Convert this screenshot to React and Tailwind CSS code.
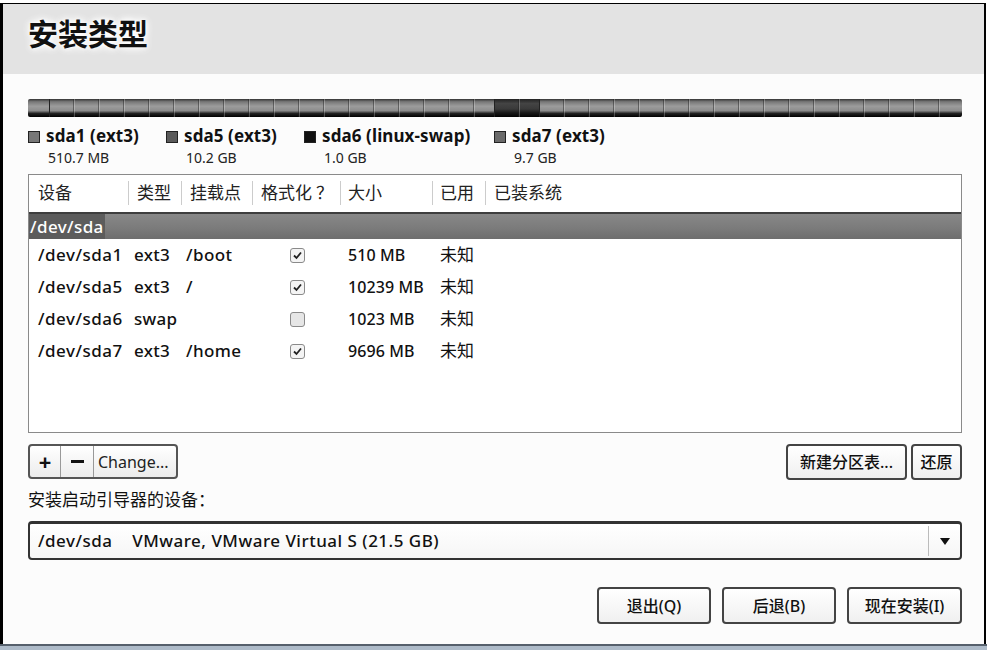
import React from "react";

const segs = [
  { w: 22, dark: false },
  { w: 445, dark: false },
  { w: 45, dark: true },
  { w: 422, dark: false },
];

const legend = [
  { name: "sda1 (ext3)", size: "510.7 MB", sw: "bg-[#777]", w: "w-[138px]" },
  { name: "sda5 (ext3)", size: "10.2 GB", sw: "bg-[#5a5a5a]", w: "w-[138px]" },
  { name: "sda6 (linux-swap)", size: "1.0 GB", sw: "bg-[#111]", w: "w-[190px]" },
  { name: "sda7 (ext3)", size: "9.7 GB", sw: "bg-[#6a6a6a]", w: "w-[138px]" },
];

const rows = [
  { dev: "/dev/sda1", type: "ext3", mount: "/boot", fmt: true, size: "510 MB" },
  { dev: "/dev/sda5", type: "ext3", mount: "/", fmt: true, size: "10239 MB" },
  { dev: "/dev/sda6", type: "swap", mount: "", fmt: false, size: "1023 MB" },
  { dev: "/dev/sda7", type: "ext3", mount: "/home", fmt: true, size: "9696 MB" },
];

function Check({ on }) {
  return (
    <div className={"w-[15px] h-[15px] rounded-[3px] border border-[#8a8a8a] flex items-center justify-center " + (on ? "bg-[#f4f4f4]" : "bg-[#e6e6e6]")}>
      {on && (
        <svg width="11" height="11" viewBox="0 0 11 11">
          <path d="M2 5.5 L4.5 8 L9 2.5" fill="none" stroke="#222" strokeWidth="1.8" />
        </svg>
      )}
    </div>
  );
}

function Btn({ children, className }) {
  return (
    <div className={"flex items-center justify-center rounded-[4px] border-2 border-[#444] bg-[linear-gradient(#ffffff,#f0f0f0)] text-[16px] font-medium text-[#111] " + className}>
      {children}
    </div>
  );
}

export default function App() {
  return (
    <div className="w-[987px] h-[650px] bg-white flex flex-col font-['Noto_Sans','Noto_Sans_CJK_SC',sans-serif] text-[#111] overflow-hidden">
      <div className="h-[3px] shrink-0" />
      <div className="flex-1 w-[986px] border-t border-black border-l-[3px] border-r-2 bg-[#fcfcfc] flex flex-col">
        <div className="h-[70px] bg-[#e3e3e3] pl-[25px] pt-[9px]">
          <div className="text-[30px] font-semibold leading-[42px] text-[#111] [text-shadow:0_0_4px_#fff,0_0_8px_#fff,0_0_10px_#fff]">安装类型</div>
        </div>
        <div className="pl-[25px] pr-[22px] pt-[25px] flex flex-col">
          {/* partition bar */}
          <div className="flex h-[18px] rounded-[2px] overflow-hidden">
            {segs.map((s, i) => (
              <div
                key={i}
                style={{ width: s.w }}
                className={
                  "h-full border-r border-[#222] last:border-r-0 " +
                  (s.dark
                    ? "bg-[linear-gradient(#222_0,#444_25%,#3a3a3a_55%,#1a1a1a_75%,#000_100%)]"
                    : "bg-[linear-gradient(#333_0,#777_15%,#9c9c9c_40%,#8c8c8c_65%,#222_80%,#000_100%)]")
                }
              >
                <div className="h-full bg-[repeating-linear-gradient(90deg,transparent_0,transparent_23px,rgba(30,30,30,0.45)_23px,rgba(30,30,30,0.45)_24px,rgba(255,255,255,0.25)_24px,rgba(255,255,255,0.25)_25px)]" />
              </div>
            ))}
          </div>
          {/* legend */}
          <div className="flex mt-[7px] h-[50px]">
            {legend.map((l, i) => (
              <div key={i} className={"flex " + l.w}>
                <div className={"w-[12px] h-[12px] mt-[7px] border border-[#222] " + l.sw} />
                <div className="ml-[6px] flex flex-col">
                  <div className="text-[17px] font-bold leading-[24px] tracking-[0.1px]">{l.name}</div>
                  <div className="text-[14px] leading-[19px] ml-[2px] text-[#222]">{l.size}</div>
                </div>
              </div>
            ))}
          </div>
          {/* table */}
          <div className="h-[259px] border border-[#8a8a8a] bg-white flex flex-col">
            <div className="h-[35px] flex items-center text-[17px] text-[#222]">
              <div className="w-[99px] pl-[9px]">设备</div>
              <div className="w-[53px] pl-[8px] border-l border-[#ccc] leading-[24px]">类型</div>
              <div className="w-[71px] pl-[8px] border-l border-[#ccc] leading-[24px]">挂载点</div>
              <div className="w-[88px] pl-[8px] border-l border-[#ccc] leading-[24px]">格式化<span className="ml-[4px]">？</span></div>
              <div className="w-[92px] pl-[7px] border-l border-[#ccc] leading-[24px]">大小</div>
              <div className="w-[53px] pl-[7px] border-l border-[#ccc] leading-[24px]">已用</div>
              <div className="flex-1 pl-[8px] border-l border-[#ccc] leading-[24px]">已装系统</div>
            </div>
            <div className="mt-[2px] h-[27px] border-t-2 border-[#3e3e3e] bg-[linear-gradient(#888,#7a7a7a_60%,#6e6e6e)] flex items-center">
              <div className="h-full px-[1px] bg-[#5c5c5c] text-white text-[17px] font-medium leading-[25px] tracking-[0.4px]">/dev/sda</div>
            </div>
            {rows.map((r, i) => (
              <div key={i} className="h-[32px] flex items-center text-[17px] font-medium text-[#111]">
                <div className="w-[105px] pl-[9px] tracking-[0.5px]">{r.dev}</div>
                <div className="w-[52px] tracking-[0.3px]">{r.type}</div>
                <div className="w-[104px] tracking-[0.4px]">{r.mount}</div>
                <div className="w-[58px]"><Check on={r.fmt} /></div>
                <div className="w-[92px] text-[16px] tracking-[0.1px]">{r.size}</div>
                <div className="flex-1 font-normal">未知</div>
              </div>
            ))}
          </div>
          {/* button row */}
          <div className="mt-[11px] h-[35px] flex justify-between">
            <div className="flex rounded-[4px] border-2 border-[#555] bg-[linear-gradient(#ffffff,#ececec)] h-[35px] w-[150px] overflow-hidden">
              <div className="w-[31px] flex items-center justify-center text-[22px] font-bold border-r border-[#999]">+</div>
              <div className="w-[33px] flex items-center justify-center border-r border-[#999]">
                <div className="w-[13px] h-[3px] bg-[#111]" />
              </div>
              <div className="flex-1 flex items-center pl-[4px] text-[16px] text-[#222]">Change...</div>
            </div>
            <div className="flex gap-[4px]">
              <Btn className="w-[121px] h-[36px]">新建分区表...</Btn>
              <Btn className="w-[51px] h-[36px]">还原</Btn>
            </div>
          </div>
          <div className="mt-[10px] text-[17px] leading-[22px] text-[#111]">安装启动引导器的设备：</div>
          <div className="mt-[10px] h-[39px] rounded-[4px] border-2 border-t-[3px] border-[#333] bg-[linear-gradient(#ffffff,#f6f6f6)] flex items-center">
            <div className="flex-1 pl-[8px] text-[17px] font-medium text-[#111] whitespace-pre tracking-[0.5px]">/dev/sda    VMware, VMware Virtual S (21.5 GB)</div>
            <div className="w-[32px] h-[30px] border-l border-[#bbb] flex items-center justify-center">
              <svg width="10" height="7" viewBox="0 0 10 7"><path d="M0 0 L10 0 L5 7 Z" fill="#111" /></svg>
            </div>
          </div>
          <div className="mt-[27px] flex justify-end gap-[11px]">
            <Btn className="w-[114px] h-[37px]">退出(Q)</Btn>
            <Btn className="w-[114px] h-[37px]">后退(B)</Btn>
            <Btn className="w-[115px] h-[37px]">现在安装(I)</Btn>
          </div>
        </div>
      </div>
      <div className="h-[2px] bg-[#56606c] shrink-0" />
      <div className="h-[4px] bg-[#aebbc9] shrink-0" />
    </div>
  );
}
